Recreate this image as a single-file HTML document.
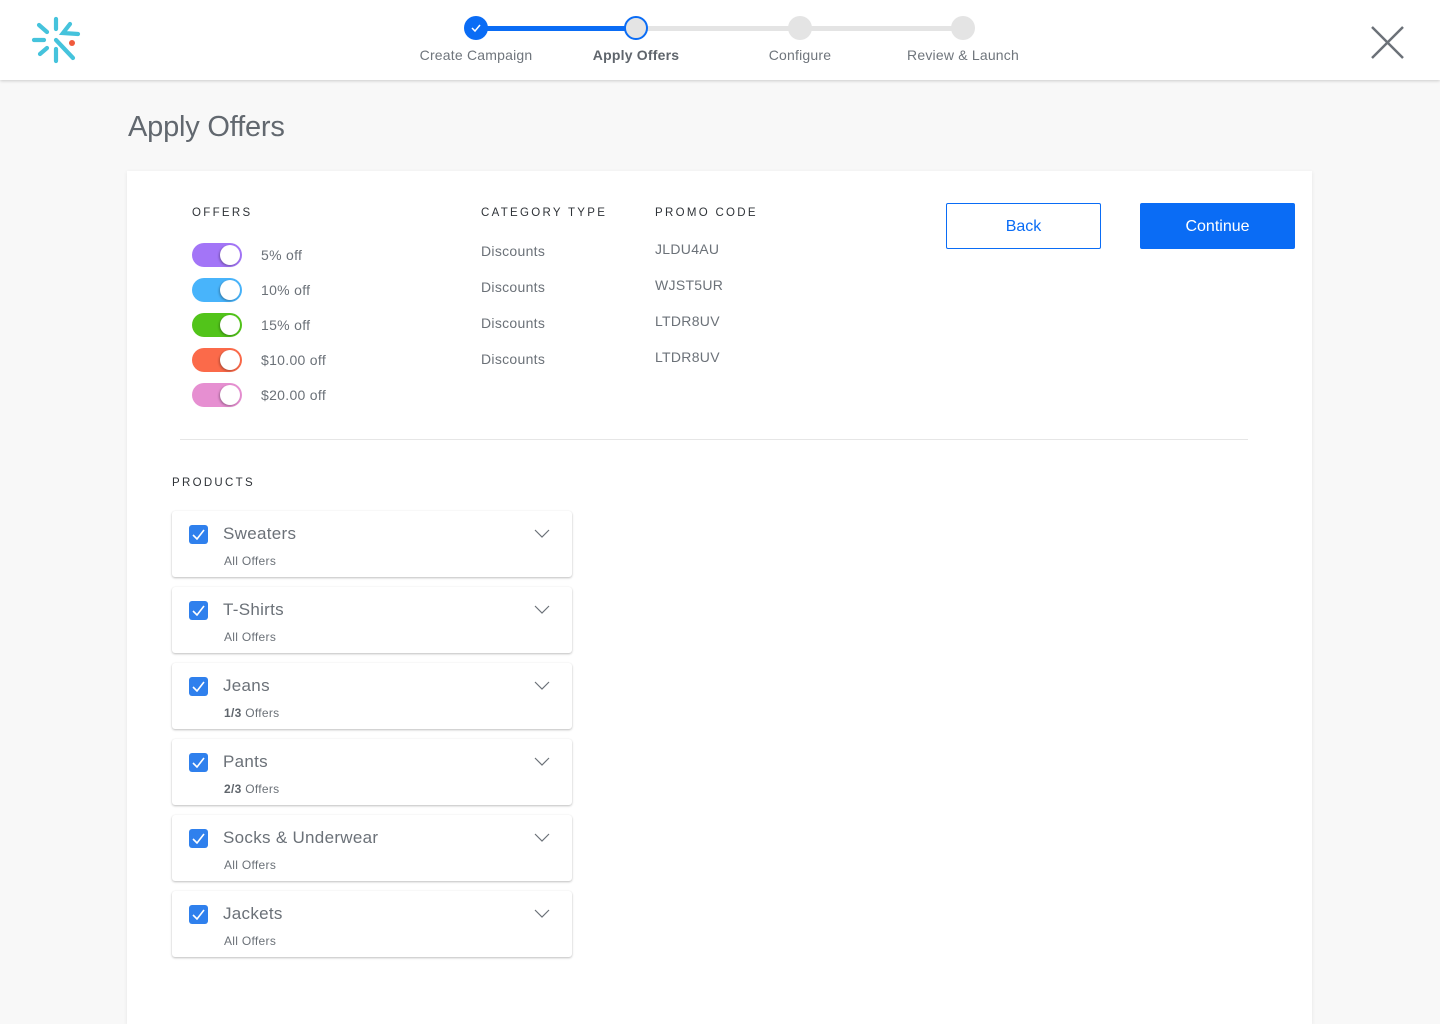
<!DOCTYPE html>
<html><head><meta charset="utf-8"><style>
*{box-sizing:border-box;margin:0;padding:0}
html{width:1440px;height:1024px;overflow:hidden}
body{width:1440px;height:1024px;overflow:hidden;background:#f8f8f8;font-family:"Liberation Sans",Arial,sans-serif;color:#6b7178;position:relative}
.hdr{position:absolute;left:0;top:0;width:1440px;height:80px;background:#fff;box-shadow:0 1px 3px rgba(0,0,0,.18)}
.abs{position:absolute}
.lbl{position:absolute;font-size:14px;color:#6f757c;white-space:nowrap;transform:translateX(-50%);top:47px;letter-spacing:.2px}
h1{position:absolute;left:128px;top:111px;font-size:29px;font-weight:normal;color:#62686f;letter-spacing:-.2px}
.panel{position:absolute;left:127px;top:171px;width:1185px;height:853px;background:#fff;box-shadow:0 1px 4px rgba(0,0,0,.08)}
.cap{position:absolute;font-size:11.5px;letter-spacing:2.3px;color:#2f3338}
.t{position:absolute;font-size:14px;color:#6b7178;letter-spacing:.3px}
.tog{position:absolute;left:192px;width:50px;height:24px;border-radius:12px}
.tog::after{content:"";position:absolute;right:2px;top:2px;width:20px;height:20px;border-radius:50%;background:#fff;box-shadow:-1px 1px 2px rgba(0,0,0,.3)}
.btn{position:absolute;top:203px;width:155px;height:46px;font-size:16px;display:flex;align-items:center;justify-content:center;border-radius:2px;padding-top:2px}
.card{position:absolute;left:172px;width:400px;height:66px;background:#fff;border-radius:3px;box-shadow:0 1px 2px rgba(0,0,0,.25),0 0 1px rgba(0,0,0,.06)}
.cb{position:absolute;left:17px;top:14px;width:19px;height:19px;background:#2f80ed;border-radius:3px}
.cb svg{position:absolute;left:3px;top:4px}
.nm{position:absolute;left:51px;top:13px;font-size:17px;color:#6b7178;letter-spacing:.3px}
.sb{position:absolute;left:52px;top:43px;font-size:12px;color:#6b7178;letter-spacing:.3px}
.sb b{font-weight:bold;color:#5f656c}
.chev{position:absolute;left:362px;top:18px}
</style></head><body>
<div class="hdr"></div>
<svg class="abs" style="left:0;top:0" width="100" height="80"><g stroke="#45c3dc" stroke-width="4.2" stroke-linecap="round" fill="none">
<line x1="56" y1="19" x2="56" y2="29"/><line x1="56" y1="49" x2="56" y2="61"/><line x1="34" y1="40" x2="44" y2="40"/>
<line x1="39" y1="25" x2="47" y2="32"/><line x1="40" y1="54" x2="47" y2="48"/>
<polyline points="70,24 63,33 78,34"/><line x1="56" y1="40" x2="73" y2="58"/></g>
<circle cx="72" cy="43" r="3" fill="#f05a3c"/></svg>
<div class="abs" style="left:476px;top:26px;width:160px;height:5px;background:#0a6cf5"></div>
<div class="abs" style="left:636px;top:26px;width:327px;height:5px;background:#e4e4e4"></div>
<div class="abs" style="left:464px;top:16px;width:24px;height:24px;border-radius:50%;background:#0a6cf5"></div>
<svg class="abs" style="left:470px;top:22px" width="12" height="12"><polyline points="2,6 5,9 10,3" stroke="#fff" stroke-width="1.5" fill="none"/></svg>
<div class="abs" style="left:624px;top:16px;width:24px;height:24px;border-radius:50%;background:#e4e4e4;border:2px solid #0a6cf5"></div>
<div class="abs" style="left:788px;top:16px;width:24px;height:24px;border-radius:50%;background:#e4e4e4"></div>
<div class="abs" style="left:951px;top:16px;width:24px;height:24px;border-radius:50%;background:#e4e4e4"></div>
<div class="lbl" style="left:476px">Create Campaign</div>
<div class="lbl" style="left:636px;font-weight:bold;color:#5f656c">Apply Offers</div>
<div class="lbl" style="left:800px">Configure</div>
<div class="lbl" style="left:963px">Review &amp; Launch</div>
<svg class="abs" style="left:1368px;top:23px" width="40" height="40"><g stroke="#6b7178" stroke-width="2.5"><line x1="4" y1="4" x2="35" y2="35"/><line x1="35" y1="4" x2="4" y2="35"/></g></svg>
<h1>Apply Offers</h1>
<div class="panel"></div>
<div class="cap" style="left:192px;top:207px">OFFERS</div>
<div class="cap" style="left:481px;top:207px">CATEGORY TYPE</div>
<div class="cap" style="left:655px;top:207px">PROMO CODE</div>
<div class="tog" style="top:243px;background:#a375f7"></div><div class="t" style="left:261px;top:247px">5% off</div>
<div class="tog" style="top:278px;background:#48b4fb"></div><div class="t" style="left:261px;top:282px">10% off</div>
<div class="tog" style="top:313px;background:#52c41a"></div><div class="t" style="left:261px;top:317px">15% off</div>
<div class="tog" style="top:348px;background:#fb6a4a"></div><div class="t" style="left:261px;top:352px">$10.00 off</div>
<div class="tog" style="top:383px;background:#e68fd1"></div><div class="t" style="left:261px;top:387px">$20.00 off</div>
<div class="t" style="left:481px;top:243px">Discounts</div><div class="t" style="left:655px;top:241px">JLDU4AU</div>
<div class="t" style="left:481px;top:279px">Discounts</div><div class="t" style="left:655px;top:277px">WJST5UR</div>
<div class="t" style="left:481px;top:315px">Discounts</div><div class="t" style="left:655px;top:313px">LTDR8UV</div>
<div class="t" style="left:481px;top:351px">Discounts</div><div class="t" style="left:655px;top:349px">LTDR8UV</div>
<div class="btn" style="left:946px;border:1px solid #0a6cf5;color:#0a6cf5">Back</div>
<div class="btn" style="left:1140px;background:#0a6cf5;color:#fff">Continue</div>
<div class="abs" style="left:180px;top:439px;width:1068px;height:1px;background:#e6e6e6"></div>
<div class="cap" style="left:172px;top:477px">PRODUCTS</div>

<div class="card" style="top:511px"><div class="cb"><svg width="13" height="11"><polyline points="1,6 5,10 12,1" stroke="#fff" stroke-width="1.6" fill="none"/></svg></div><div class="nm">Sweaters</div><div class="sb">All Offers</div><svg class="chev" width="16" height="10"><polyline points="1,1 8,8 15,1" stroke="#6b7178" stroke-width="1.2" fill="none"/></svg></div>
<div class="card" style="top:587px"><div class="cb"><svg width="13" height="11"><polyline points="1,6 5,10 12,1" stroke="#fff" stroke-width="1.6" fill="none"/></svg></div><div class="nm">T-Shirts</div><div class="sb">All Offers</div><svg class="chev" width="16" height="10"><polyline points="1,1 8,8 15,1" stroke="#6b7178" stroke-width="1.2" fill="none"/></svg></div>
<div class="card" style="top:663px"><div class="cb"><svg width="13" height="11"><polyline points="1,6 5,10 12,1" stroke="#fff" stroke-width="1.6" fill="none"/></svg></div><div class="nm">Jeans</div><div class="sb"><b>1/3</b> Offers</div><svg class="chev" width="16" height="10"><polyline points="1,1 8,8 15,1" stroke="#6b7178" stroke-width="1.2" fill="none"/></svg></div>
<div class="card" style="top:739px"><div class="cb"><svg width="13" height="11"><polyline points="1,6 5,10 12,1" stroke="#fff" stroke-width="1.6" fill="none"/></svg></div><div class="nm">Pants</div><div class="sb"><b>2/3</b> Offers</div><svg class="chev" width="16" height="10"><polyline points="1,1 8,8 15,1" stroke="#6b7178" stroke-width="1.2" fill="none"/></svg></div>
<div class="card" style="top:815px"><div class="cb"><svg width="13" height="11"><polyline points="1,6 5,10 12,1" stroke="#fff" stroke-width="1.6" fill="none"/></svg></div><div class="nm">Socks &amp; Underwear</div><div class="sb">All Offers</div><svg class="chev" width="16" height="10"><polyline points="1,1 8,8 15,1" stroke="#6b7178" stroke-width="1.2" fill="none"/></svg></div>
<div class="card" style="top:891px"><div class="cb"><svg width="13" height="11"><polyline points="1,6 5,10 12,1" stroke="#fff" stroke-width="1.6" fill="none"/></svg></div><div class="nm">Jackets</div><div class="sb">All Offers</div><svg class="chev" width="16" height="10"><polyline points="1,1 8,8 15,1" stroke="#6b7178" stroke-width="1.2" fill="none"/></svg></div>
</body></html>
